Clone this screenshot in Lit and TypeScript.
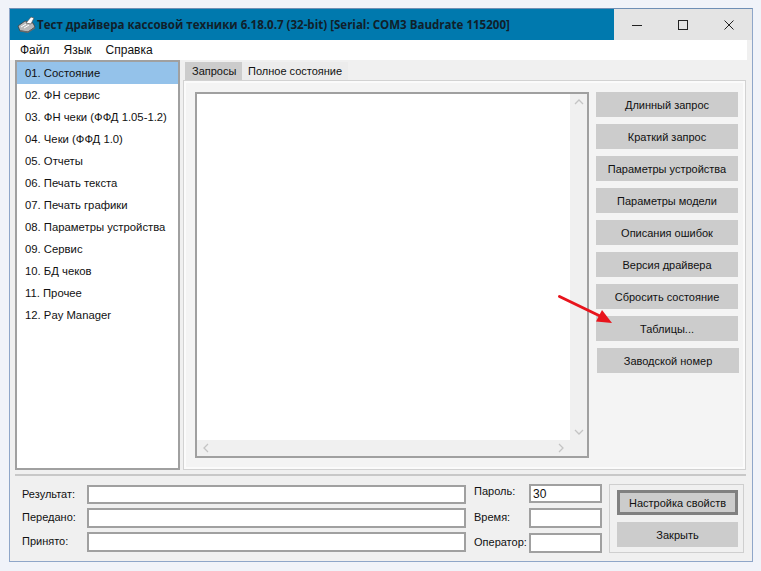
import { LitElement, html, css, svg } from "lit";
import { customElement } from "lit/decorators.js";

const items = ["01. Состояние","02. ФН сервис","03. ФН чеки (ФФД 1.05-1.2)","04. Чеки (ФФД 1.0)","05. Отчеты","06. Печать текста","07. Печать графики","08. Параметры устройства","09. Сервис","10. БД чеков","11. Прочее","12. Pay Manager"];
const buttons = ["Длинный запрос","Краткий запрос","Параметры устройства","Параметры модели","Описания ошибок","Версия драйвера","Сбросить состояние","Таблицы..."];

const chev = (d: string) => html`<svg class="chev" width="10" height="10" viewBox="0 0 10 10"><path d=${d} fill="none" stroke="#c4c4c4" stroke-width="1.3"/></svg>`;

@customElement("app-root")
export class AppRoot extends LitElement {
  static styles = css`
    :host { display:block; position:relative; width:761px; height:571px; overflow:hidden; background:#f0f3f9; font-family:"Liberation Sans",Arial,sans-serif; font-size:11px; color:#111; padding:8px 0 0 9px; box-sizing:border-box; }
    .window { width:744px; height:554px; box-sizing:border-box; border:1px solid #8ea6c9; border-top-color:#6f8fb5; background:#f0f0f0; display:flex; flex-direction:column; }
    .titlebar { height:31px; flex:none; display:flex; background:#e4e4e4; }
    .title { width:604px; background:#0079ae; display:flex; align-items:center; gap:0; padding-left:7px; box-sizing:border-box; font-family:"Open Sans",sans-serif; font-weight:700; font-size:11.55px; color:#10202a; white-space:nowrap; }
    .controls { flex:1; display:flex; }
    .ctl { width:46px; display:flex; align-items:center; justify-content:center; }
    .menu { height:20px; flex:none; background:#fff; margin-right:5px; display:flex; align-items:center; gap:14px; padding-left:10px; font-size:12px; }
    .main { height:410px; flex:none; display:flex; padding-left:5px; gap:3px; }
    .side { width:165px; box-sizing:border-box; border:2px solid #a0a0a0; background:#fff; font-size:11.3px; }
    .side div { height:22px; line-height:22px; padding-left:8px; white-space:nowrap; }
    .side .sel { background:#94c2ea; }
    .right { width:563px; display:flex; flex-direction:column; }
    .tabs { height:18px; margin-top:2px; padding-left:2px; display:flex; flex:none; }
    .tab { line-height:18px; padding:0 7px; background:#ececec; white-space:nowrap; box-sizing:border-box; }
    .tab.on { background:#cccccc; width:57px; }
    .tab.off { width:106px; padding-left:6px; }
    .panel { flex:1; border:1px solid #d2d2d2; background:#fbfbfb; padding:2px; }
    .panel-in { height:100%; box-sizing:border-box; background:#f4f4f4; padding:9px 0 0 9px; display:flex; gap:7px; }
    .memo { width:394px; height:366px; box-sizing:border-box; border:2px solid #a0a0a0; display:grid; grid-template-columns:373px 17px; grid-template-rows:346px 16px; background:#f0f0f0; }
    .memo .white { background:#fff; }
    .vs { display:flex; flex-direction:column; justify-content:space-between; align-items:center; padding:3px 0; }
    .hs { display:flex; justify-content:space-between; align-items:center; padding:0 4px; }
    .chev { display:block; }
    .btns { display:flex; flex-direction:column; gap:7px; width:143px; }
    .btn { height:25px; width:142px; flex:none; background:#cccccc; display:flex; align-items:center; justify-content:center; }
    .btn.last { margin-left:1px; }
    .sep { height:2px; flex:none; margin:4px 5px 0; background:#c8c8c8; width:731px; }
    .footer { flex:1; display:flex; padding:0 0 0 12px; }
    .labels-grid { display:grid; grid-template-columns:65px 379px; grid-template-rows:19px 20px 20px; row-gap:4px; margin-top:9px; align-items:center; }
    .lbl { padding-bottom:2px; }
    .lbl.up { padding-bottom:5px; }
    .inp { box-sizing:border-box; border:2px solid #a0a0a0; background:#fff; height:100%; line-height:16px; padding-left:2px; font-size:12px; }
    .grid2 { display:grid; grid-template-columns:55px 73px; grid-template-rows:19px 20px 20px; row-gap:5px; margin:8px 0 0 8px; align-items:center; }
    .group { margin:8px 0 0 7px; width:135px; height:69px; box-sizing:border-box; border:1px solid #cfcfcf; padding:5px 0 0 7px; display:flex; flex-direction:column; gap:7px; }
    .fbtn { width:121px; height:25px; flex:none; box-sizing:border-box; background:#cccccc; display:flex; align-items:center; justify-content:center; }
    .fbtn.def { border:3px solid #808080; }
    .arrow { position:absolute; left:550px; top:290px; }
  `;

  render() {
    return html`
      <div class="window">
        <div class="titlebar">
          <div class="title">
            <svg width="20" height="18" viewBox="0 0 20 18">
              <path d="M1 10 L8 5 L16 7 L18 11 L11 16 L3 15 Z" fill="#b9b9b9" stroke="#3c3c3c" stroke-width=".8"/>
              <path d="M3 14 L11 15.5 L18 11 L18 12.5 L11 17 L3 15.5 Z" fill="#6a6a6a"/>
              <path d="M9 7 L14 1 L17 2 L14 8 Z" fill="#fff" stroke="#555" stroke-width=".7"/>
              <path d="M4 11 L9 8 M7 12 L12 9" stroke="#fff" stroke-width="1"/>
            </svg>
            <span>Тест драйвера кассовой техники 6.18.0.7 (32-bit) [Serial: COM3 Baudrate 115200]</span>
          </div>
          <div class="controls">
            <div class="ctl"><svg width="12" height="12" viewBox="0 0 12 12"><path d="M1 6.5H11" stroke="#222"/></svg></div>
            <div class="ctl"><svg width="12" height="12" viewBox="0 0 12 12"><rect x="1.5" y="1.5" width="9" height="9" fill="none" stroke="#222"/></svg></div>
            <div class="ctl"><svg width="12" height="12" viewBox="0 0 12 12"><path d="M1.5 1.5L10.5 10.5M10.5 1.5L1.5 10.5" stroke="#222"/></svg></div>
          </div>
        </div>
        <div class="menu"><span>Файл</span><span>Язык</span><span>Справка</span></div>
        <div class="main">
          <div class="side">
            ${items.map((t, i) => html`<div class=${i === 0 ? "sel" : ""}>${t}</div>`)}
          </div>
          <div class="right">
            <div class="tabs"><div class="tab on">Запросы</div><div class="tab off">Полное состояние</div></div>
            <div class="panel"><div class="panel-in">
              <div class="memo">
                <div class="white"></div>
                <div class="vs">${chev("M1 7L5 3L9 7")}${chev("M1 3L5 7L9 3")}</div>
                <div class="hs">${chev("M7 1L3 5L7 9")}${chev("M3 1L7 5L3 9")}</div>
                <div></div>
              </div>
              <div class="btns">
                ${buttons.map((b) => html`<div class="btn">${b}</div>`)}
                <div class="btn last">Заводской номер</div>
              </div>
            </div></div>
          </div>
        </div>
        <div class="sep"></div>
        <div class="footer">
          <div class="labels-grid">
            <span class="lbl">Результат:</span><div class="inp"></div>
            <span class="lbl">Передано:</span><div class="inp"></div>
            <span class="lbl">Принято:</span><div class="inp"></div>
          </div>
          <div class="grid2">
            <span class="lbl up">Пароль:</span><div class="inp">30</div>
            <span class="lbl">Время:</span><div class="inp"></div>
            <span class="lbl">Оператор:</span><div class="inp"></div>
          </div>
          <div class="group">
            <div class="fbtn def">Настройка свойств</div>
            <div class="fbtn">Закрыть</div>
          </div>
        </div>
      </div>
      <svg class="arrow" width="70" height="40" viewBox="0 0 70 40">
        ${svg`<path d="M9.5 6.5L52 27" stroke="#e8141c" stroke-width="3" stroke-linecap="round"/><path d="M62 33L46 31.5L52 20Z" fill="#e8141c"/>`}
      </svg>
    `;
  }
}
